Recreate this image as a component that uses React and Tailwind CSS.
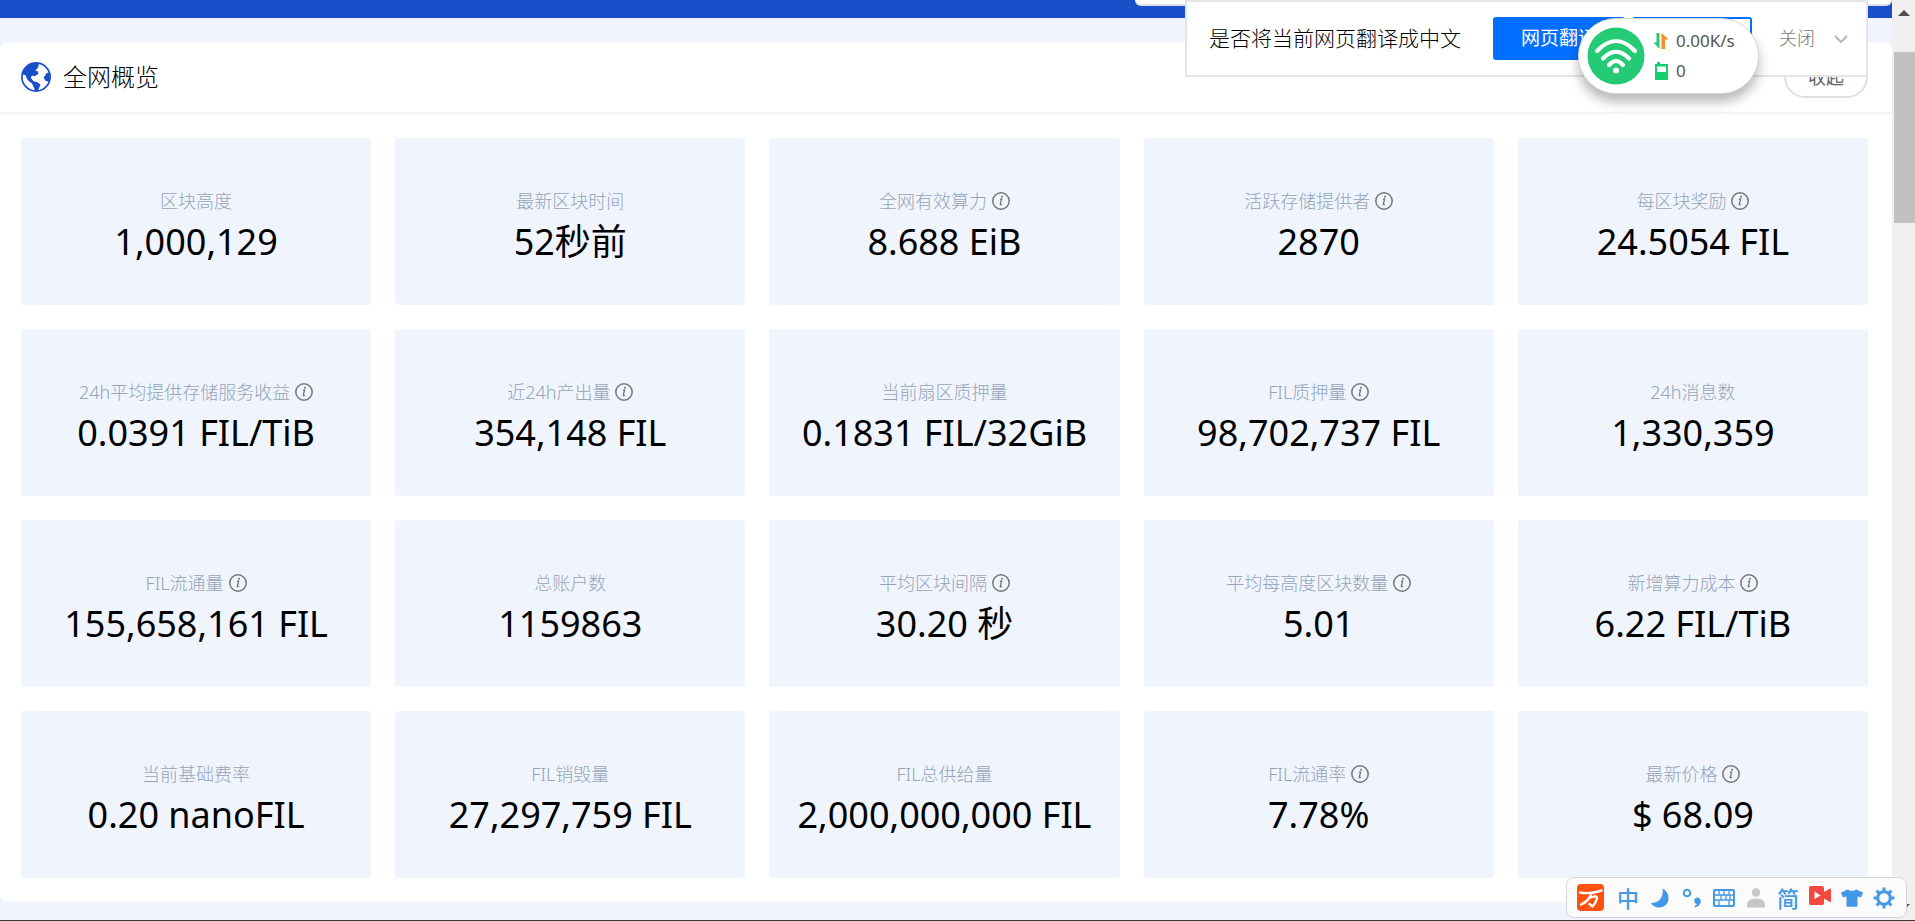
import { FaTshirt } from 'react-icons/fa';

const stats = [
  { label: '区块高度', value: '1,000,129' },
  { label: '最新区块时间', value: '52秒前' },
  { label: '全网有效算力', value: '8.688 EiB', info: true },
  { label: '活跃存储提供者', value: '2870', info: true },
  { label: '每区块奖励', value: '24.5054 FIL', info: true },
  { label: '24h平均提供存储服务收益', value: '0.0391 FIL/TiB', info: true },
  { label: '近24h产出量', value: '354,148 FIL', info: true },
  { label: '当前扇区质押量', value: '0.1831 FIL/32GiB' },
  { label: 'FIL质押量', value: '98,702,737 FIL', info: true },
  { label: '24h消息数', value: '1,330,359' },
  { label: 'FIL流通量', value: '155,658,161 FIL', info: true },
  { label: '总账户数', value: '1159863' },
  { label: '平均区块间隔', value: '30.20 秒', info: true },
  { label: '平均每高度区块数量', value: '5.01', info: true },
  { label: '新增算力成本', value: '6.22 FIL/TiB', info: true },
  { label: '当前基础费率', value: '0.20 nanoFIL' },
  { label: 'FIL销毁量', value: '27,297,759 FIL' },
  { label: 'FIL总供给量', value: '2,000,000,000 FIL' },
  { label: 'FIL流通率', value: '7.78%', info: true },
  { label: '最新价格', value: '$ 68.09', info: true },
];

function GlobeIcon() {
  return (
    <svg viewBox="0 0 30 30" className="w-[30px] h-[30px] text-[#1a4fc9]" fill="currentColor" aria-hidden="true">
      <circle cx="15" cy="15" r="14.1" fill="none" stroke="currentColor" strokeWidth="1.7" />
      <path d="M18 1 17.2 5.5 14.2 8.6 17 9.4 17.4 12 13.5 14.2 11 13.6 9.8 15.6 11.4 18 13 19.4 16 20 19.5 22.6 18.3 25.6 16.8 29 14.2 29 12.6 25 11 21.5 8 19.3 6 17 4.6 13.2 1.2 12.2A14 14 0 0 1 18 1Z" />
      <path d="M29 10.2 25.8 11 22.6 15.4 24.6 19 28.4 19.8A14 14 0 0 0 29 10.2Z" />
    </svg>
  );
}

function InfoIcon() {
  return (
    <svg viewBox="0 0 18 18" className="w-[18px] h-[18px] text-[#757575]" fill="none" stroke="currentColor" aria-hidden="true">
      <circle cx="9" cy="9" r="8.2" strokeWidth="1.5" />
      <path d="M8 7.4 9.6 7.1 8.3 12.2Q8.2 13.2 9.9 12.3" strokeWidth="1.3" />
      <circle cx="10" cy="4.8" r="1" fill="currentColor" stroke="none" />
    </svg>
  );
}

function StatCard({ label, value, info }) {
  return (
    <div className="flex flex-col items-center rounded-[3px] bg-[#f0f5fd] pt-[49px] pb-9">
      <dt className="flex items-center gap-[5px] text-[18px] leading-7 font-light text-[#94a3ba]">
        {label}
        {info && <InfoIcon />}
      </dt>
      <dd className="text-[36px] leading-[54px] text-black">{value}</dd>
    </div>
  );
}

function TranslateBar() {
  return (
    <div className="absolute top-0 right-[47px] flex h-[77px] items-center border-2 border-[#e5e5e5] bg-white pl-[22px] pr-[18px]">
      <span className="text-[21px] font-light text-black">是否将当前网页翻译成中文</span>
      <button className="ml-8 h-[43px] rounded-[3px] bg-[#006eff] px-7 text-[19px] text-white">网页翻译</button>
      <button className="ml-[7px] h-[43px] w-[120px] rounded-[3px] border-2 border-[#006eff] bg-white" aria-label="翻译选项" />
      <button className="ml-[27px] text-[18px] font-light text-[#777777]">关闭</button>
      <button className="ml-[19px]" aria-label="更多">
        <svg viewBox="0 0 14 14" className="w-3.5 h-3.5" fill="none" stroke="#b8b8b8" strokeWidth="2.2">
          <path d="M1 4 7 10 13 4" />
        </svg>
      </button>
    </div>
  );
}

function NetworkWidget() {
  return (
    <div className="absolute top-[18px] right-[156px] flex h-[76px] w-[181px] items-center rounded-full border border-[#d9d9d9] bg-white pl-2 shadow-[0_8px_12px_rgba(0,0,0,0.28)]">
      <svg viewBox="0 0 58 58" className="w-[58px] h-[58px]" fill="none" stroke="white" strokeWidth="4.2" strokeLinecap="round" aria-hidden="true">
        <circle cx="29" cy="29" r="28.5" fill="#25cb74" stroke="none" />
        <path d="M10 24Q29 4 48 24" />
        <path d="M16 31.5Q29 18 42 31.5" />
        <path d="M22 38Q29 30 36 38" />
        <circle cx="29" cy="43.5" r="3" fill="white" stroke="none" />
      </svg>
      <div className="ml-2 flex flex-col gap-1.5 text-[17px] leading-6 text-[#555555]">
        <div className="flex items-center gap-[7px]">
          <svg viewBox="0 0 16 18" className="w-4 h-[18px]" aria-hidden="true">
            <path d="M3.5 1H6.5V17L0.5 10.5H3.5Z" fill="#25cb74" />
            <path d="M8.5 1 15.5 7.5H12V17H8.5Z" fill="#ff8a1f" />
          </svg>
          <span>0.00K/s</span>
        </div>
        <div className="flex items-center gap-[7px]">
          <svg viewBox="0 0 16 18" className="w-4 h-[18px]" aria-hidden="true">
            <path d="M2 2H4V0H7V2H15V18H2Z" fill="#14d06c" />
            <path d="M4 4.5H13V10H4Z" fill="white" />
          </svg>
          <span>0</span>
        </div>
      </div>
    </div>
  );
}

function ImeToolbar() {
  return (
    <div className="absolute right-2 bottom-[2px] flex h-[41px] items-center rounded-lg border border-[#d6d6d6] bg-[#fbfbfb] pl-2.5 pr-1.5 text-[#4499e6]">
      <svg viewBox="0 0 27 27" className="mr-2 w-[27px] h-[27px]" aria-hidden="true">
        <rect width="27" height="27" rx="4" fill="#ff5210" />
        <path d="M3 8.5Q13 10.5 24.5 6.5M14.5 9.5Q12 17 4 20.5M11.5 14.5Q20 10.5 20 14Q19 19 15.5 22.5L12.5 20" fill="none" stroke="white" strokeWidth="2.4" strokeLinecap="round" />
      </svg>
      <span className="w-8 text-center text-[22px] leading-8 font-medium">中</span>
      <span className="flex w-8 justify-center">
        <svg viewBox="0 0 20 20" className="w-5 h-5" fill="currentColor" aria-hidden="true">
          <path d="M12.5 0.5C21.5 5 20.5 19 9 19.5 5.5 19.6 2.5 18 1 15 9 15 14 9 12.5 0.5Z" />
        </svg>
      </span>
      <span className="flex w-8 justify-center">
        <svg viewBox="0 0 20 20" className="w-5 h-5" aria-hidden="true">
          <circle cx="5" cy="5" r="3.3" fill="none" stroke="currentColor" strokeWidth="2" />
          <path d="M15 9.5A3.5 3.5 0 0 1 18.8 13C18.8 16.5 16 19 12.5 19.5V18Q15 17 15 16A3.3 3.3 0 0 1 15 9.5Z" fill="currentColor" />
        </svg>
      </span>
      <span className="flex w-8 justify-center">
        <svg viewBox="0 0 22 18" className="w-[22px] h-[18px]" fill="none" stroke="currentColor" strokeWidth="1.3" aria-hidden="true">
          <rect x="1" y="1" width="20" height="16" rx="1" strokeWidth="2" />
          <path d="M1 6H21M1 11H21M6 1V6M11 1V6M16 1V6M8 6V11M13 6V11M17 6V11M6 11V17M16 11V17" />
        </svg>
      </span>
      <span className="flex w-8 justify-center">
        <svg viewBox="0 0 18 20" className="w-[18px] h-5" fill="#c6c6c6" aria-hidden="true">
          <circle cx="9" cy="4.5" r="4.2" />
          <path d="M0 19.5V17Q0 10.5 9 10.5T18 17V19.5Z" />
        </svg>
      </span>
      <span className="w-8 text-center text-[22px] leading-8 font-medium">简</span>
      <span className="flex w-8 justify-center pb-1">
        <svg viewBox="0 0 22 19" className="w-[22px] h-[19px]" aria-hidden="true">
          <path d="M2 0H13Q15 0 15 2V6L21 2.5Q22 2 22 4V15Q22 16.5 21 16L15 12.5V17Q15 19 13 19H2Q0 19 0 17V2Q0 0 2 0Z" fill="#f4473f" />
          <path d="M5.5 5.5 11.5 9.5 5.5 13Z" fill="white" />
        </svg>
      </span>
      <span className="flex w-8 justify-center">
        <FaTshirt className="w-[22px] h-[22px]" />
      </span>
      <span className="flex w-8 justify-center">
        <svg viewBox="0 0 22 22" className="w-[22px] h-[22px]" fill="none" stroke="currentColor" aria-hidden="true">
          <circle cx="11" cy="11" r="6.3" strokeWidth="3" />
          <path d="M11 0.5V4M11 18V21.5M0.5 11H4M18 11H21.5M3.6 3.6 6 6M16 16 18.4 18.4M3.6 18.4 6 16M16 6 18.4 3.6" strokeWidth="3" />
        </svg>
      </span>
    </div>
  );
}

function Scrollbar() {
  return (
    <div className="flex w-[23px] shrink-0 flex-col items-center bg-[#f0f0f0] pt-2.5 pb-2.5">
      <svg viewBox="0 0 12 6" className="w-3 h-1.5" fill="#505050" aria-hidden="true">
        <path d="M0 6 6 0 12 6Z" />
      </svg>
      <div className="mt-9 ml-0.5 h-[171px] w-[21px] bg-[#c1c1c1]" />
      <svg viewBox="0 0 12 6" className="mt-auto w-3 h-1.5" fill="#505050" aria-hidden="true">
        <path d="M0 0 6 6 12 0Z" />
      </svg>
    </div>
  );
}

export default function App() {
  return (
    <div className="relative flex min-h-screen overflow-hidden border-b border-[#3c3c3c] bg-[#f0f5fd] font-['Noto_Sans','Noto_Sans_CJK_SC',sans-serif]">
      <div className="flex min-w-0 flex-1 flex-col">
        <header className="flex h-[18px] justify-end bg-[#1a4fc9]">
          <div className="h-1.5 w-2/5 rounded-b-md border-b-2 border-[#dcdfe6] bg-white" />
        </header>

        <main className="mt-6 rounded-lg bg-white">
          <div className="flex h-[72px] items-center justify-between border-b-2 border-[#f0f5fb] pl-[21px] pr-6">
            <h1 className="flex items-center gap-3 text-[24px] font-light text-black">
              <GlobeIcon />
              全网概览
            </h1>
            <button className="h-[42px] rounded-full border-2 border-[#dcdfe6] px-[22px] text-[18px] text-[#606266]">收起</button>
          </div>
          <dl className="grid grid-cols-5 gap-6 py-6 pl-[21px] pr-6">
            {stats.map(stat => (
              <StatCard key={stat.label} {...stat} />
            ))}
          </dl>
        </main>
      </div>

      <Scrollbar />
      <TranslateBar />
      <NetworkWidget />
      <ImeToolbar />
    </div>
  );
}
